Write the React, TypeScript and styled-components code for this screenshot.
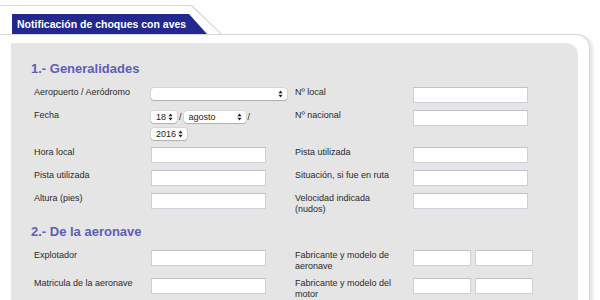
import React from "react";
import styled, { createGlobalStyle } from "styled-components";

const GlobalStyle = createGlobalStyle`
  html, body {
    margin: 0;
    padding: 0;
    background: #fff;
  }
  body {
    font-family: "Liberation Sans", Arial, sans-serif;
    color: #2a2a2a;
  }
  * {
    box-sizing: border-box;
  }
`;

type Field = { label: string; kind: "input" | "select" | "date" | "pair" };

const generalLeft: Field[] = [
  { label: "Aeropuerto / Aeródromo", kind: "select" },
  { label: "Fecha", kind: "date" },
  { label: "Hora local", kind: "input" },
  { label: "Pista utilizada", kind: "input" },
  { label: "Altura (pies)", kind: "input" },
];

const generalRight: Field[] = [
  { label: "Nº local", kind: "input" },
  { label: "Nº nacional", kind: "input" },
  { label: "Pista utilizada", kind: "input" },
  { label: "Situación, si fue en ruta", kind: "input" },
  { label: "Velocidad indicada (nudos)", kind: "input" },
];

const aircraftLeft: Field[] = [
  { label: "Explotador", kind: "input" },
  { label: "Matricula de la aeronave", kind: "input" },
];

const aircraftRight: Field[] = [
  { label: "Fabricante y modelo de aeronave", kind: "pair" },
  { label: "Fabricante y modelo del motor", kind: "pair" },
];

const Arrows = () => (
  <ArrowIcon width="5" height="8" viewBox="0 0 5 8">
    <path d="M2.5 0.5 L4.6 3.2 L0.4 3.2 Z M2.5 7.5 L4.6 4.8 L0.4 4.8 Z" fill="#222" />
  </ArrowIcon>
);

const Select = ({ w, value }: { w: number; value?: string }) => (
  <SelectBox $w={w}>
    <SelectField defaultValue={value ?? ""}>
      <option value={value ?? ""}>{value ?? ""}</option>
    </SelectField>
    <Arrows />
  </SelectBox>
);

const renderField = (kind: Field["kind"], wide: number) => {
  if (kind === "select") return <Select w={136} />;
  if (kind === "date")
    return (
      <DateStack>
        <DateLine>
          <Select w={26} value="18" />
          <Slash>/</Slash>
          <Select w={62} value="agosto" />
          <Slash>/</Slash>
        </DateLine>
        <DateLine>
          <Select w={36} value="2016" />
        </DateLine>
      </DateStack>
    );
  if (kind === "pair")
    return (
      <Pair>
        <TextInput $w={58} />
        <TextInput $w={58} />
      </Pair>
    );
  return <TextInput $w={wide} />;
};

const Section = ({
  title,
  left,
  right,
  gap,
}: {
  title: string;
  left: Field[];
  right: Field[];
  gap: number;
}) => (
  <SectionWrap>
    <Heading>{title}</Heading>
    <FormGrid $gap={gap}>
      {left.map((f, i) => (
        <React.Fragment key={f.label + i}>
          <Label>{f.label}</Label>
          <Cell>{renderField(f.kind, 115)}</Cell>
          <Label>{right[i].label}</Label>
          <Cell>{renderField(right[i].kind, 115)}</Cell>
        </React.Fragment>
      ))}
    </FormGrid>
  </SectionWrap>
);

export default function App() {
  return (
    <>
      <GlobalStyle />
      <Page>
        <TabFrame>
          <TabFrameInner>
            <Tab>Notificación de choques con aves</Tab>
          </TabFrameInner>
        </TabFrame>
        <Box>
          <Panel>
            <Section title="1.- Generalidades" left={generalLeft} right={generalRight} gap={7} />
            <Section title="2.- De la aeronave" left={aircraftLeft} right={aircraftRight} gap={6} />
          </Panel>
        </Box>
      </Page>
    </>
  );
}

const Page = styled.div`
  width: 600px;
  height: 300px;
  overflow: hidden;
  padding-top: 5px;
`;

const TabFrame = styled.div`
  width: 222px;
  height: 29px;
  padding-top: 1px;
  background: #d6d6d6;
  clip-path: polygon(0 0, 192px 0, 222px 100%, 0 100%);
`;

const TabFrameInner = styled.div`
  height: 28px;
  padding: 8px 0 0 12px;
  background: #fff;
  clip-path: polygon(0 0, 191px 0, 220.5px 100%, 0 100%);
`;

const Tab = styled.div`
  width: 195px;
  height: 20px;
  padding-left: 5px;
  background: #23288f;
  color: #fff;
  font-size: 10.5px;
  font-weight: bold;
  line-height: 20px;
  white-space: nowrap;
  clip-path: polygon(0 0, 177px 0, 100% 100%, 0 100%);
`;

const Box = styled.div`
  width: 590px;
  height: 270px;
  padding: 8px 11px 0 11px;
  border-top: 1px solid #d6d6d6;
  border-right: 1px solid #d6d6d6;
  border-top-right-radius: 14px;
  box-shadow: 3px 1px 3px rgba(0, 0, 0, 0.1);
`;

const Panel = styled.div`
  height: 100%;
  padding: 18px 0 0 20px;
  background: #e5e5e5;
  border-top-right-radius: 12px;
`;

const SectionWrap = styled.section`
  & + & {
    margin-top: 9px;
  }
`;

const Heading = styled.h2`
  margin: 0 0 10px;
  font-size: 13px;
  line-height: 16px;
  font-weight: bold;
  color: #5b60b1;
`;

const FormGrid = styled.div<{ $gap: number }>`
  display: grid;
  grid-template-columns: 117px 144px 118px 1fr;
  row-gap: ${(p) => p.$gap}px;
  align-items: start;
  padding-left: 3px;
`;

const Label = styled.div`
  max-width: 100px;
  font-size: 9px;
  line-height: 11px;
  color: #2a2a2a;
`;

const Cell = styled.div`
  display: flex;
  align-items: flex-start;
`;

const TextInput = styled.input.attrs({ type: "text" })<{ $w: number }>`
  width: ${(p) => p.$w}px;
  height: 16px;
  margin: 0;
  padding: 0 3px;
  background: #fff;
  border: 1px solid #ccd0db;
  border-top-color: #bfc3cf;
  border-radius: 0;
  font: 9px "Liberation Sans", Arial, sans-serif;
  outline: none;
`;

const Pair = styled.div`
  display: flex;
  gap: 4px;
`;

const SelectBox = styled.span<{ $w: number }>`
  position: relative;
  display: inline-flex;
  align-items: center;
  width: ${(p) => p.$w}px;
  height: 12px;
  margin-top: 1px;
  background: #fff;
  border-radius: 3px;
  box-shadow: 0 0 0 0.5px rgba(0, 0, 0, 0.12), 0 1px 1px rgba(0, 0, 0, 0.18);
`;

const SelectField = styled.select`
  appearance: none;
  width: 100%;
  height: 100%;
  margin: 0;
  padding: 0 0 0 5px;
  border: none;
  background: transparent;
  font: 9px "Liberation Sans", Arial, sans-serif;
  line-height: 12px;
  color: #222;
  outline: none;
`;

const ArrowIcon = styled.svg`
  position: absolute;
  right: 4px;
  top: 2px;
  pointer-events: none;
`;

const DateStack = styled.div`
  display: flex;
  flex-direction: column;
  gap: 3px;
`;

const DateLine = styled.div`
  display: flex;
  align-items: flex-start;
`;

const Slash = styled.span`
  margin: 0 2px;
  font-size: 9px;
  line-height: 14px;
  color: #2a2a2a;
`;
